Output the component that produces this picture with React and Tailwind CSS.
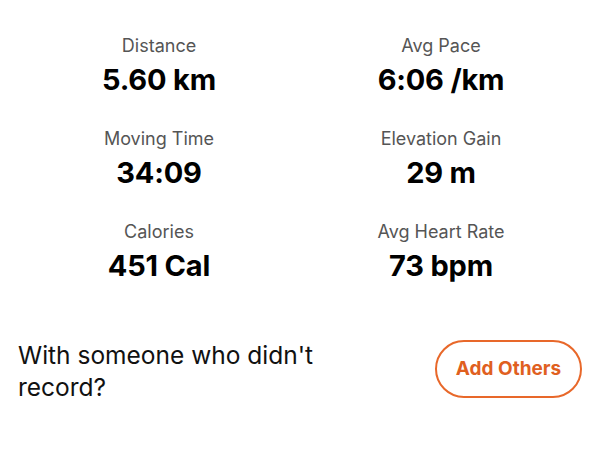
const stats = [
  ['Distance', '5.60 km'],
  ['Avg Pace', '6:06 /km'],
  ['Moving Time', '34:09'],
  ['Elevation Gain', '29 m'],
  ['Calories', '451 Cal'],
  ['Avg Heart Rate', '73 bpm'],
];

export default function App() {
  return (
    <div className="w-[600px] h-[450px] bg-white px-[18px] pt-[34px]" style={{ fontFamily: 'Inter, "Noto Sans", sans-serif' }}>
      <div className="grid grid-cols-2 gap-y-[29px]">
        {stats.map(([label, value]) => (
          <div key={label} className="flex flex-col items-center">
            <div className="text-[18px] leading-[24px] text-[#555]">{label}</div>
            <div className="mt-[4px] text-[29px] leading-[36px] font-bold text-black tracking-[-0.2px]">{value}</div>
          </div>
        ))}
      </div>
      <div className="mt-[55px] flex items-start justify-between">
        <p className="w-[330px] text-[24.5px] leading-[32px] text-[#111]">With someone who didn't record?</p>
        <button className="mt-[1px] w-[147px] h-[58px] rounded-full border-2 border-[#e8682a] text-[#e0601f] text-[19px] font-bold">
          Add Others
        </button>
      </div>
    </div>
  );
}
